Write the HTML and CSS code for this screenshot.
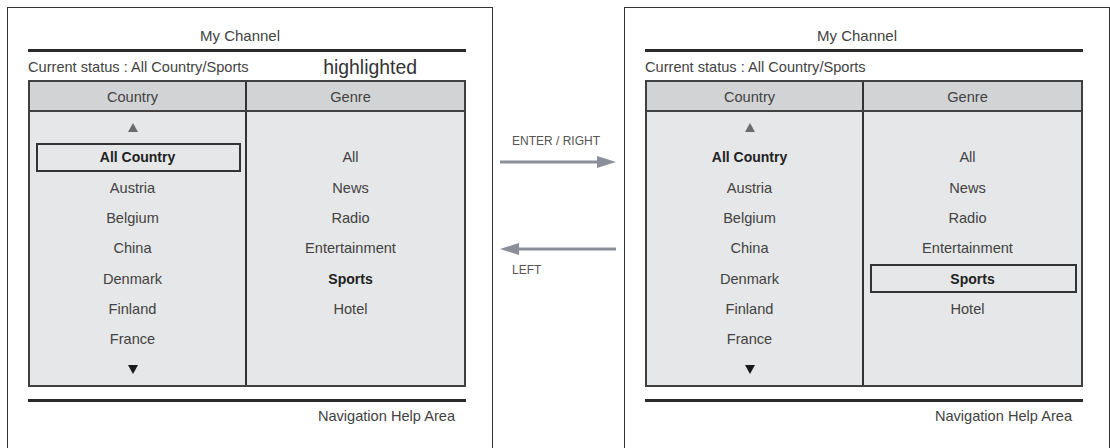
FILE: index.html
```html
<!DOCTYPE html>
<html>
<head>
<meta charset="utf-8">
<link rel="stylesheet" href="styles.css">
</head>
<body>
<div class="page">
  <section class="frame">
    <div class="title">My Channel</div>
    <div class="rule"></div>
    <div class="status">
      <span>Current status : All Country/Sports</span>
      <span class="hl-label">highlighted</span>
    </div>
    <div class="table">
      <div class="head">
        <div class="hcell left">Country</div>
        <div class="hcell">Genre</div>
      </div>
      <div class="body">
        <div class="col left">
          <div class="row"><svg class="tri" width="10" height="9" viewBox="0 0 10 9"><polygon points="5,0 10,9 0,9" fill="#6b6b6b"/></svg></div>
          <div class="row"><span class="box bold">All Country</span></div>
          <div class="row">Austria</div>
          <div class="row">Belgium</div>
          <div class="row">China</div>
          <div class="row">Denmark</div>
          <div class="row">Finland</div>
          <div class="row">France</div>
          <div class="row"><svg class="tri" width="10" height="9" viewBox="0 0 10 9"><polygon points="0,0 10,0 5,9" fill="#1a1a1a"/></svg></div>
        </div>
        <div class="col">
          <div class="row"></div>
          <div class="row">All</div>
          <div class="row">News</div>
          <div class="row">Radio</div>
          <div class="row">Entertainment</div>
          <div class="row bold">Sports</div>
          <div class="row">Hotel</div>
          <div class="row"></div>
          <div class="row"></div>
        </div>
      </div>
    </div>
    <div class="rule bottom"></div>
    <div class="help">Navigation Help Area</div>
  </section>

  <div class="middle">
    <div class="key enter">ENTER / RIGHT</div>
    <svg class="arrow right-arrow" width="116" height="12" viewBox="0 0 116 12">
      <rect x="0" y="4.5" width="99" height="3" fill="#8a8f9a"/>
      <polygon points="97,0 116,6 97,12" fill="#8a8f9a"/>
    </svg>
    <svg class="arrow left-arrow" width="116" height="12" viewBox="0 0 116 12">
      <rect x="17" y="4.5" width="99" height="3" fill="#8a8f9a"/>
      <polygon points="19,0 0,6 19,12" fill="#8a8f9a"/>
    </svg>
    <div class="key left-key">LEFT</div>
  </div>

  <section class="frame">
    <div class="title">My Channel</div>
    <div class="rule"></div>
    <div class="status">
      <span>Current status : All Country/Sports</span>
    </div>
    <div class="table">
      <div class="head">
        <div class="hcell left">Country</div>
        <div class="hcell">Genre</div>
      </div>
      <div class="body">
        <div class="col left">
          <div class="row"><svg class="tri" width="10" height="9" viewBox="0 0 10 9"><polygon points="5,0 10,9 0,9" fill="#6b6b6b"/></svg></div>
          <div class="row bold">All Country</div>
          <div class="row">Austria</div>
          <div class="row">Belgium</div>
          <div class="row">China</div>
          <div class="row">Denmark</div>
          <div class="row">Finland</div>
          <div class="row">France</div>
          <div class="row"><svg class="tri" width="10" height="9" viewBox="0 0 10 9"><polygon points="0,0 10,0 5,9" fill="#1a1a1a"/></svg></div>
        </div>
        <div class="col">
          <div class="row"></div>
          <div class="row">All</div>
          <div class="row">News</div>
          <div class="row">Radio</div>
          <div class="row">Entertainment</div>
          <div class="row"><span class="box bold">Sports</span></div>
          <div class="row">Hotel</div>
          <div class="row"></div>
          <div class="row"></div>
        </div>
      </div>
    </div>
    <div class="rule bottom"></div>
    <div class="help">Navigation Help Area</div>
  </section>
</div>
</body>
</html>
```

FILE: styles.css
```css
* { box-sizing: border-box; }
html, body {
  margin: 0;
  padding: 0;
  background: #ffffff;
  overflow: hidden;
}
body {
  width: 1110px;
  height: 448px;
  font-family: "Liberation Sans", Arial, sans-serif;
  color: #424242;
}
.page {
  display: flex;
  align-items: flex-start;
  padding-left: 7px;
}
.frame {
  width: 486px;
  height: 441px;
  margin-top: 7px;
  border: 1px solid #333333;
  border-bottom: 0;
  padding: 0 26px 0 20px;
}
.title {
  height: 41px;
  padding-top: 19px;
  line-height: 17px;
  font-size: 15px;
  text-align: center;
  padding-right: 14px;
}
.rule {
  height: 3px;
  background: #2a2a2a;
}
.status {
  height: 28px;
  display: flex;
  align-items: center;
  font-size: 14.6px;
  padding-top: 2px;
}
.hl-label {
  margin-left: auto;
  margin-right: 49px;
  font-size: 19.4px;
  color: #333333;
}
.table {
  border: 2px solid #404040;
}
.head {
  display: grid;
  grid-template-columns: 1fr 1fr;
  height: 30px;
  background: #d2d3d5;
  border-bottom: 2px solid #404040;
}
.hcell {
  display: flex;
  align-items: center;
  justify-content: center;
  font-size: 14.6px;
  padding-right: 10px;
  padding-top: 1px;
}
.hcell.left,
.col.left {
  border-right: 2px solid #333333;
}
.body {
  display: grid;
  grid-template-columns: 1fr 1fr;
  background: #e6e7e8;
}
.col {
  display: flex;
  flex-direction: column;
}
.row {
  height: 30.3px;
  display: flex;
  align-items: center;
  justify-content: center;
  font-size: 14.6px;
  padding-right: 10px;
}
.bold {
  font-weight: bold;
  font-size: 14px;
  color: #222222;
}
.row .box {
  flex: 1;
  align-self: stretch;
  margin: 1px -6px 1px 6px;
  border: 2px solid #333333;
  display: flex;
  align-items: center;
  justify-content: center;
  padding-right: 2px;
}
.tri { display: block; }
.rule.bottom {
  margin-top: 12px;
}
.help {
  font-size: 14.6px;
  text-align: right;
  padding-right: 11px;
  padding-top: 5px;
  line-height: 18px;
}
.middle {
  width: 131px;
  display: flex;
  flex-direction: column;
}
.key {
  font-size: 12px;
  line-height: 14px;
  color: #555555;
  padding-left: 19px;
}
.enter {
  margin-top: 134px;
}
.arrow {
  display: block;
  margin-left: 7px;
}
.right-arrow {
  margin-top: 8px;
}
.left-arrow {
  margin-top: 75px;
}
.left-key {
  margin-top: 8px;
}
```
